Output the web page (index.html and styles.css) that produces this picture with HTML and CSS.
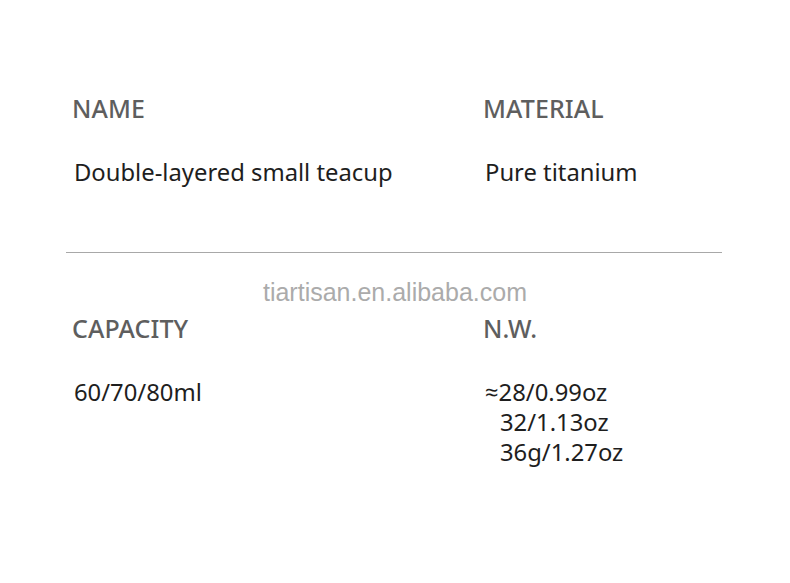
FILE: index.html
```html
<!DOCTYPE html>
<html>
<head>
<meta charset="utf-8">
<link rel="stylesheet" href="styles.css">
</head>
<body>
<div class="page">
  <section class="row top">
    <div class="cell">
      <div class="label">NAME</div>
      <div class="value">Double-layered small teacup</div>
    </div>
    <div class="cell">
      <div class="label">MATERIAL</div>
      <div class="value">Pure titanium</div>
    </div>
  </section>
  <hr class="divider">
  <div class="watermark">tiartisan.en.alibaba.com</div>
  <section class="row bottom">
    <div class="cell">
      <div class="label">CAPACITY</div>
      <div class="value">60/70/80ml</div>
    </div>
    <div class="cell">
      <div class="label">N.W.</div>
      <div class="value multi">
        <div>≈28/0.99oz</div>
        <div class="indent">32/1.13oz</div>
        <div class="indent">36g/1.27oz</div>
      </div>
    </div>
  </section>
</div>
</body>
</html>
```
FILE: styles.css
```css
html, body {
  margin: 0;
  padding: 0;
  background: #ffffff;
}
body {
  font-family: "Noto Sans", "Open Sans", sans-serif;
  width: 790px;
  height: 583px;
  overflow: hidden;
}
.page {
  padding: 92px 68px 0 66px;
}
.row {
  display: grid;
  grid-template-columns: 411px 1fr;
  padding-left: 6px;
}
.label {
  font-size: 25px;
  line-height: 32px;
  color: #5e5e5e;
  font-weight: 500;
  letter-spacing: 0.1px;
}
.value {
  font-size: 23.8px;
  line-height: 30px;
  color: #1e1e1e;
  margin-top: 33px;
  padding-left: 2px;
}
.divider {
  border: 0;
  border-top: 1px solid #a8a8a8;
  margin: 65px 0 0 0;
}
.watermark {
  font-family: "Liberation Sans", Arial, sans-serif;
  font-size: 25px;
  color: #ababab;
  text-align: center;
  margin-top: 24px;
  line-height: 30px;
  padding-left: 2px;
}
.bottom {
  margin-top: 5px;
}
.indent {
  padding-left: 15px;
}
```
